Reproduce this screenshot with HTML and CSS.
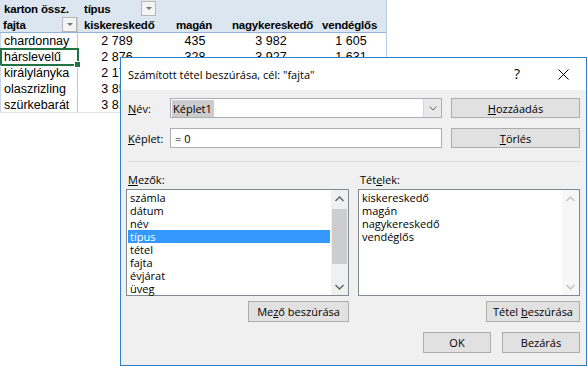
FILE: index.html
```html
<!DOCTYPE html>
<html lang="hu">
<head>
    <meta charset="UTF-8" />
    <title>Számított tétel beszúrása</title>
    <link rel="stylesheet" href="styles.css">
</head>
<body>

<div class="sheet">
    <div class="cell head">karton össz.</div>
    <div class="cell head head-type">típus <span class="drop"></span></div>
    <div class="cell head head-fill"></div>

    <div class="cell head head-low row-label">fajta <span class="drop drop-end"></span></div>
    <div class="cell head head-low">kiskereskedő</div>
    <div class="cell head head-low">magán</div>
    <div class="cell head head-low">nagykereskedő</div>
    <div class="cell head head-low">vendéglős</div>

    <div class="cell row-label">chardonnay</div>
    <div class="cell num col-b">2 789</div>
    <div class="cell num col-c">435</div>
    <div class="cell num">3 982</div>
    <div class="cell num">1 605</div>

    <div class="cell row-label active">hárslevelű</div>
    <div class="cell num col-b">2 876</div>
    <div class="cell num col-c">328</div>
    <div class="cell num">3 927</div>
    <div class="cell num">1 631</div>

    <div class="cell row-label">királylányka</div>
    <div class="cell num col-b">2 174</div>
    <div class="cell num col-c">512</div>
    <div class="cell num">3 408</div>
    <div class="cell num">1 322</div>

    <div class="cell row-label">olaszrizling</div>
    <div class="cell num col-b">3 855</div>
    <div class="cell num col-c">694</div>
    <div class="cell num">4 118</div>
    <div class="cell num">2 045</div>

    <div class="cell row-label last">szürkebarát</div>
    <div class="cell num col-b last">3 812</div>
    <div class="cell num col-c last">277</div>
    <div class="cell num last">3 560</div>
    <div class="cell num last">1 487</div>
</div>

<div class="dialog">
    <div class="titlebar">
        <span class="title">Számított tétel beszúrása, cél: "fajta"</span>
        <span class="cap-btn cap-help">?</span>
        <span class="cap-btn">
            <svg width="11" height="11" viewBox="0 0 11 11"><path d="M0.5 0.5 L10.5 10.5 M10.5 0.5 L0.5 10.5" stroke="#000" stroke-width="1" fill="none"/></svg>
        </span>
    </div>

    <div class="dlg-body">
        <div class="field-row">
            <label class="field-label"><u>N</u>év:</label>
            <div class="combo">
                <span class="combo-text"><span class="sel">Képlet1</span></span>
                <span class="combo-btn">
                    <svg width="8" height="5" viewBox="0 0 8 5"><path d="M0.5 0.5 L4 4 L7.5 0.5" stroke="#606060" fill="none"/></svg>
                </span>
            </div>
            <button class="btn btn-side"><u>H</u>ozzáadás</button>
        </div>

        <div class="field-row row-gap">
            <label class="field-label"><u>K</u>éplet:</label>
            <div class="textbox">= 0</div>
            <button class="btn btn-side"><u>T</u>örlés</button>
        </div>

        <div class="sep"></div>

        <div class="lists">
            <div class="list-col">
                <div class="list-label"><u>M</u>ezők:</div>
                <div class="listbox">
                    <ul class="items">
                        <li>számla</li>
                        <li>dátum</li>
                        <li>név</li>
                        <li class="selected">típus</li>
                        <li>tétel</li>
                        <li>fajta</li>
                        <li>évjárat</li>
                        <li>üveg</li>
                    </ul>
                    <div class="vscroll">
                        <span class="arrow">
                            <svg width="9" height="6" viewBox="0 0 9 6"><path d="M0.5 5 L4.5 1 L8.5 5" stroke="#606060" stroke-width="1.4" fill="none"/></svg>
                        </span>
                        <span class="track"><span class="thumb"></span></span>
                        <span class="arrow">
                            <svg width="9" height="6" viewBox="0 0 9 6"><path d="M0.5 1 L4.5 5 L8.5 1" stroke="#606060" stroke-width="1.4" fill="none"/></svg>
                        </span>
                    </div>
                </div>
                <button class="btn btn-insert btn-field">Me<u>z</u>ő beszúrása</button>
            </div>

            <div class="list-col">
                <div class="list-label">Tét<u>e</u>lek:</div>
                <div class="listbox">
                    <ul class="items">
                        <li>kiskereskedő</li>
                        <li>magán</li>
                        <li>nagykereskedő</li>
                        <li>vendéglős</li>
                    </ul>
                    <div class="vscroll disabled">
                        <span class="arrow">
                            <svg width="9" height="6" viewBox="0 0 9 6"><path d="M0.5 5 L4.5 1 L8.5 5" stroke="#c2c2c2" stroke-width="1.4" fill="none"/></svg>
                        </span>
                        <span class="track"></span>
                        <span class="arrow">
                            <svg width="9" height="6" viewBox="0 0 9 6"><path d="M0.5 1 L4.5 5 L8.5 1" stroke="#c2c2c2" stroke-width="1.4" fill="none"/></svg>
                        </span>
                    </div>
                </div>
                <button class="btn btn-insert btn-item">Tétel <u>b</u>eszúrása</button>
            </div>
        </div>

        <div class="footer">
            <button class="btn btn-ok">OK</button>
            <button class="btn btn-close">Bezárás</button>
        </div>
    </div>
</div>

</body>
</html>
```

FILE: styles.css
```css
* {
    box-sizing: border-box;
}
body {
    margin: 0;
    width: 588px;
    height: 366px;
    position: relative;
    overflow: hidden;
    background: #fff;
    font-family: "Liberation Sans", Arial, sans-serif;
}

/* pivot table */
.sheet {
    display: grid;
    grid-template-columns: 78px 92px 56px 90px 70px;
    grid-template-rows: 17px 16px repeat(5, 16px);
    width: 387px;
    border-right: 1px solid #b8cce4;
    font-size: 12.5px;
    color: #000;
}
.cell {
    display: flex;
    align-items: center;
    padding: 0 4px;
    white-space: nowrap;
    position: relative;
}
.head {
    background: #dce6f1;
    font-weight: bold;
    font-size: 11.5px;
    letter-spacing: -0.2px;
}
.head-low {
    border-bottom: 1px solid #95b3d7;
    padding-left: 6px;
}
.head-type {
    padding-left: 6px;
    padding-right: 14px;
}
.head-fill {
    grid-column: 3 / 6;
}
.row-label {
    border-right: 1px solid #b8cce4;
    border-left: 1px solid #c9d7ea;
    padding-left: 3px;
}
.head.row-label {
    border-left: none;
    padding-right: 0;
}
.last {
    border-bottom: 1px solid #dce6f1;
}
.drop {
    margin-left: auto;
    width: 15px;
    height: 15px;
    border: 1px solid #b6b6b6;
    background: #f4f4f4;
    position: relative;
}
.drop::after {
    content: "";
    position: absolute;
    left: 4px;
    top: 5px;
    border-left: 3px solid transparent;
    border-right: 3px solid transparent;
    border-top: 3px solid #777;
}
.num {
    justify-content: center;
}
.col-b {
    padding-right: 18px;
}
.col-c {
    padding-right: 10px;
}
.active::after {
    content: "";
    position: absolute;
    left: -1px;
    top: -1px;
    right: -2px;
    bottom: -1px;
    border: 2px solid #217346;
}
.active::before {
    content: "";
    position: absolute;
    right: -4px;
    bottom: -3px;
    width: 5px;
    height: 5px;
    background: #217346;
    border: 1px solid #fff;
    z-index: 1;
}

/* dialog window */
.dialog {
    position: absolute;
    left: 120px;
    top: 57px;
    width: 467px;
    height: 309px;
    border: 1px solid #2f7fc8;
    background: #f0f0f0;
    display: flex;
    flex-direction: column;
    font-family: "Open Sans", "Liberation Sans", sans-serif;
    font-size: 11px;
    color: #000;
}
.titlebar {
    height: 32px;
    background: #fff;
    display: flex;
    align-items: center;
    padding-left: 7px;
}
.title {
    flex: 1;
    font-size: 11px;
}
.cap-btn {
    width: 46px;
    height: 32px;
    display: flex;
    align-items: center;
    justify-content: center;
}
.cap-help {
    font-size: 14px;
    padding-bottom: 1px;
}
.dlg-body {
    padding: 8px 6px 0 7px;
}
.field-row {
    display: flex;
    height: 20px;
}
.row-gap {
    margin-top: 10px;
}
.field-label {
    width: 42px;
    display: flex;
    align-items: center;
}
.combo,
.textbox {
    width: 272px;
    height: 20px;
    border: 1px solid #abadb3;
    background: #fff;
    display: flex;
    align-items: center;
}
.combo-text {
    flex: 1;
    padding-left: 1px;
}
.sel {
    background: #cccccc;
    padding: 1px 2px 1px 1px;
}
.combo-btn {
    width: 18px;
    height: 18px;
    background: #e9e9e9;
    border-left: 1px solid #d4d4d4;
    display: flex;
    align-items: center;
    justify-content: center;
}
.textbox {
    padding-left: 4px;
}
.btn {
    font-family: inherit;
    font-size: 11px;
    color: #000;
    background: #e1e1e1;
    border: 1px solid #adadad;
    border-radius: 0;
    padding: 0;
    height: 21px;
}
.btn-side {
    width: 129px;
    height: 20px;
    margin-left: 9px;
}
.sep {
    height: 1px;
    background: #dadada;
    margin-top: 13px;
}
.lists {
    display: flex;
    gap: 9px;
    margin-left: -2px;
    margin-top: 10px;
}
.list-col {
    display: flex;
    flex-direction: column;
}
.list-col:first-child {
    width: 223px;
}
.list-col:last-child {
    width: 222px;
}
.list-label {
    height: 17px;
    padding-left: 2px;
}
.listbox {
    height: 107px;
    border: 1px solid #828790;
    background: #fff;
    display: flex;
}
.items {
    list-style: none;
    margin: 0;
    padding: 1px 0 0 1px;
    flex: 1;
}
.items li {
    height: 13px;
    line-height: 13px;
    padding-left: 2px;
}
.items .selected {
    background: #3399ff;
    color: #fff;
}
.vscroll {
    width: 17px;
    margin-left: 1px;
    background: #f0f0f0;
    display: flex;
    flex-direction: column;
}
.vscroll.disabled {
    background: #f7f7f7;
}
.arrow {
    height: 17px;
    display: flex;
    align-items: center;
    justify-content: center;
}
.track {
    flex: 1;
    padding: 2px 1px 0;
}
.thumb {
    display: block;
    height: 55px;
    background: #cdcdcd;
}
.btn-insert {
    align-self: flex-end;
    margin-top: 5px;
}
.btn-field {
    width: 101px;
}
.btn-item {
    width: 94px;
}
.footer {
    display: flex;
    justify-content: flex-end;
    gap: 11px;
    margin-top: 10px;
}
.btn-ok {
    width: 68px;
}
.btn-close {
    width: 78px;
}
```
